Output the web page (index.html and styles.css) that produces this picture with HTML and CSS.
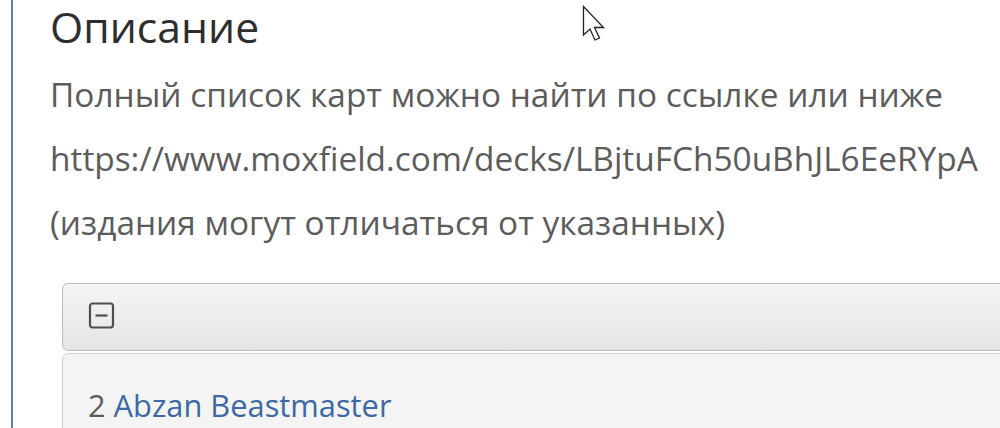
FILE: index.html
```html
<!DOCTYPE html>
<html lang="ru">
<head>
<meta charset="utf-8">
<title>Описание</title>
<link rel="stylesheet" href="styles.css">
</head>
<body>
<div class="page">
  <section class="desc">
    <h2 class="title">Описание</h2>
    <p class="line">Полный список карт можно найти по ссылке или ниже</p>
    <p class="line">https://www.moxfield.com/decks/LBjtuFCh50uBhJL6EeRYpA</p>
    <p class="line">(издания могут отличаться от указанных)</p>
    <div class="spoiler">
      <div class="spoiler-head">
        <svg class="toggle" width="28" height="28" viewBox="0 0 28 28">
          <rect x="2" y="1.5" width="23" height="24" rx="2.5" ry="2.5" fill="none" stroke="#4f4f4f" stroke-width="2.2"/>
          <line x1="7.5" y1="13.5" x2="19.5" y2="13.5" stroke="#4f4f4f" stroke-width="2.2"/>
        </svg>
      </div>
      <div class="spoiler-body">
        <span class="qty">2</span> <a class="card" href="#">Abzan Beastmaster</a>
      </div>
    </div>
  </section>
  <svg class="cursor" width="26" height="38" viewBox="0 0 26 38">
    <path d="M1.5 1.5 L1.5 30 L8 24 L13 35 L17.5 33 L12.5 22.5 L21.5 22.5 Z" fill="#fff" stroke="#222" stroke-width="1.3" stroke-linejoin="miter"/>
  </svg>
</div>
</body>
</html>
```

FILE: styles.css
```css
html, body {
  margin: 0;
  padding: 0;
  background: #fff;
  overflow: hidden;
}
body {
  font-family: "Open Sans", "Liberation Sans", sans-serif;
}
.page {
  position: relative;
  width: 1000px;
  height: 428px;
  overflow: hidden;
}
.desc {
  margin-left: 11px;
  border-left: 2px solid #5b7fb0;
  padding-left: 37px;
  height: 428px;
  box-sizing: border-box;
}
.title {
  margin: 0 0 9px 0;
  font-size: 42.7px;
  font-weight: 400;
  line-height: 53px;
  color: #2e2e2e;
}
.line {
  margin: 0;
  font-size: 33.4px;
  line-height: 64px;
  color: #5c5c5c;
  white-space: nowrap;
}
.spoiler {
  margin: 29px 0 0 12px;
  width: 1000px;
}
.spoiler-head {
  height: 66px;
  border: 1px solid #bcbcbc;
  border-radius: 6px;
  background: linear-gradient(#f5f5f5, #e5e5e5);
  display: flex;
  align-items: center;
  padding-left: 25px;
  box-sizing: content-box;
}
.toggle {
  display: block;
  margin-top: -3px;
}
.spoiler-body {
  margin-top: 2px;
  border: 1px solid #d0d0d0;
  border-radius: 6px 6px 0 0;
  background: #f4f4f4;
  padding: 31px 25px 20px;
  font-size: 30.8px;
  line-height: 40px;
  color: #5c5c5c;
  height: 200px;
}
.card {
  color: #3c69a3;
  text-decoration: none;
}
.cursor {
  position: absolute;
  left: 582px;
  top: 5px;
}
```
